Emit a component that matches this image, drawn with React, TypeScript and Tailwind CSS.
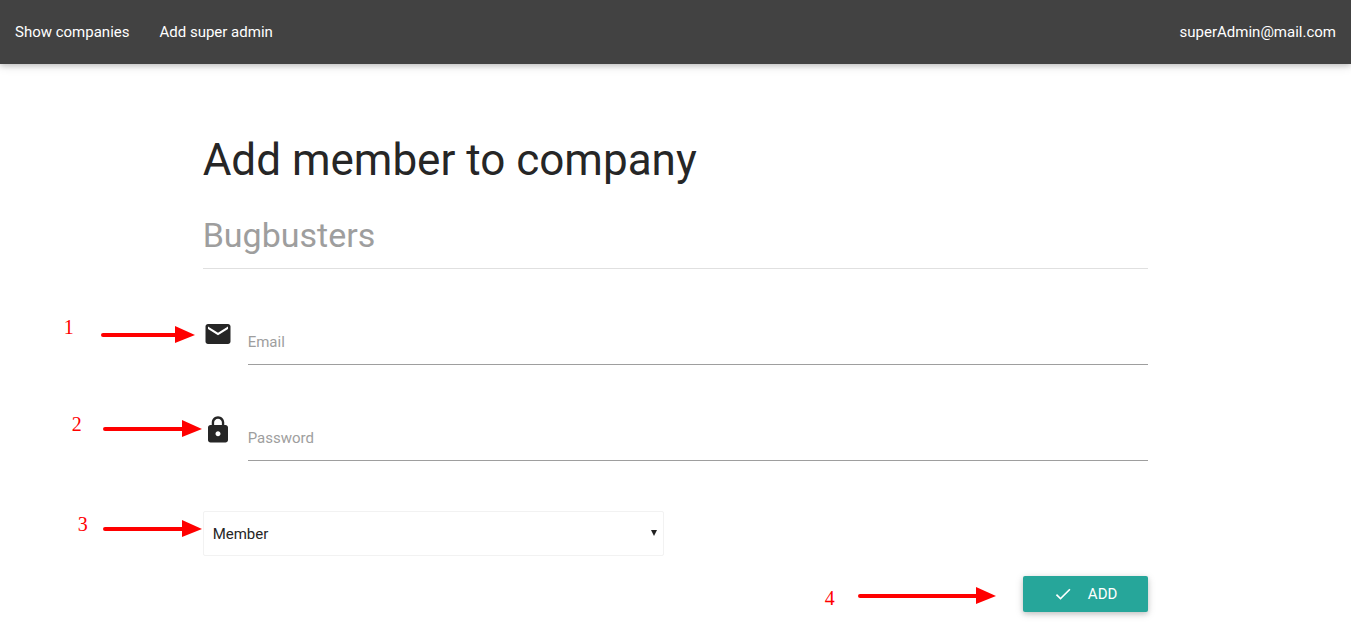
import { useState } from "react";
import type { ReactNode } from "react";
import { MdCheck, MdEmail, MdLock } from "react-icons/md";

type CalloutProps = {
  number: number;
  length: number;
  place: string;
  drop: string;
};

function Callout({ number, length, place, drop }: CalloutProps) {
  const neck = length - 20;
  return (
    <div className={`pointer-events-none absolute right-full flex items-start ${place}`}>
      <span className="font-['Liberation_Serif',serif] text-[20px] leading-5 text-[#ff0000]">
        {number}
      </span>
      <svg width={length} height="17" viewBox={`0 0 ${length} 17`} className={`shrink-0 ${drop}`} aria-hidden="true">
        <line x1="2" y1="9" x2={neck} y2="9" stroke="#ff0000" strokeWidth="4" strokeLinecap="round" />
        <polygon points={`${neck},0 ${length},9 ${neck},17`} fill="#ff0000" />
      </svg>
    </div>
  );
}

type FieldProps = {
  id: string;
  label: string;
  type: string;
  icon: ReactNode;
  callout: ReactNode;
};

function Field({ id, label, type, icon, callout }: FieldProps) {
  const [value, setValue] = useState("");
  return (
    <div className="relative flex items-start gap-[15px]">
      {callout}
      {icon}
      <div className="relative flex-1">
        <input
          id={id}
          type={type}
          value={value}
          onChange={(e) => setValue(e.target.value)}
          className="block h-[45px] w-full border-b border-[#9e9e9e] bg-transparent text-[15px] outline-none focus:border-[#26a69a]"
        />
        {value === "" && (
          <label htmlFor={id} className="absolute left-0 top-3 cursor-text text-[15px] leading-5 text-[#9e9e9e]">
            {label}
          </label>
        )}
      </div>
    </div>
  );
}

export default function App() {
  return (
    <div className="bg-white font-[Roboto,sans-serif] text-[15px] text-[#262626]">
      <nav className="flex h-16 items-center justify-between bg-[#424242] text-white shadow-[0_2px_5px_0_rgba(0,0,0,0.16),0_2px_10px_0_rgba(0,0,0,0.12)]">
        <div className="flex">
          <a href="#companies" className="px-[15px]">Show companies</a>
          <a href="#add-admin" className="px-[15px]">Add super admin</a>
        </div>
        <a href="#account" className="px-[15px]">superAdmin@mail.com</a>
      </nav>

      <main className="mx-auto w-[70%] pt-[72px] pb-6">
        <h1 className="text-[44px] leading-12">Add member to company</h1>
        <h2 className="mt-[31px] border-b border-[#e0e0e0] pb-[13px] text-[34px] leading-10 text-[#9e9e9e]">
          Bugbusters
        </h2>

        <form className="mt-[51px] flex flex-col" onSubmit={(e) => e.preventDefault()}>
          <div className="flex flex-col gap-[51px]">
            <Field
              id="email"
              label="Email"
              type="email"
              icon={<MdEmail size={30} className="-mt-px shrink-0" aria-hidden="true" />}
              callout={<Callout number={1} length={94} place="-top-[3px] mr-2 gap-[27px]" drop="mt-[9px]" />}
            />
            <Field
              id="password"
              label="Password"
              type="password"
              icon={<MdLock size={30} className="-mt-px shrink-0" aria-hidden="true" />}
              callout={<Callout number={2} length={99} place="-top-[2px] mr-px gap-[21px]" drop="mt-[6px]" />}
            />
          </div>

          <div className="relative mt-[50px] w-1/2 pr-3">
            <Callout number={3} length={99} place="top-[3px] mr-px gap-[15px]" drop="mt-[6px]" />
            <div className="relative">
              <select
                aria-label="Role"
                className="block h-[45px] w-full appearance-none rounded-xs border border-[#f2f2f2] bg-white px-[9px] pt-[2px] text-[15px]"
              >
                <option>Member</option>
              </select>
              <svg
                width="6"
                height="6"
                viewBox="0 0 6 6"
                className="pointer-events-none absolute right-[7px] top-[19px]"
                aria-hidden="true"
              >
                <path d="M0 0h6L3 6z" fill="#212121" />
              </svg>
            </div>
          </div>

          <div className="relative mt-5 self-end">
            <Callout number={4} length={138} place="top-3 mr-[27px] gap-[23px]" drop="-mt-px" />
            <button
              type="submit"
              className="flex h-9 items-center gap-[15px] rounded-xs bg-[#26a69a] pr-[31px] pl-[30px] text-white shadow-[0_2px_5px_0_rgba(0,0,0,0.16),0_2px_10px_0_rgba(0,0,0,0.12)]"
            >
              <MdCheck size={20} aria-hidden="true" />
              ADD
            </button>
          </div>
        </form>
      </main>
    </div>
  );
}
